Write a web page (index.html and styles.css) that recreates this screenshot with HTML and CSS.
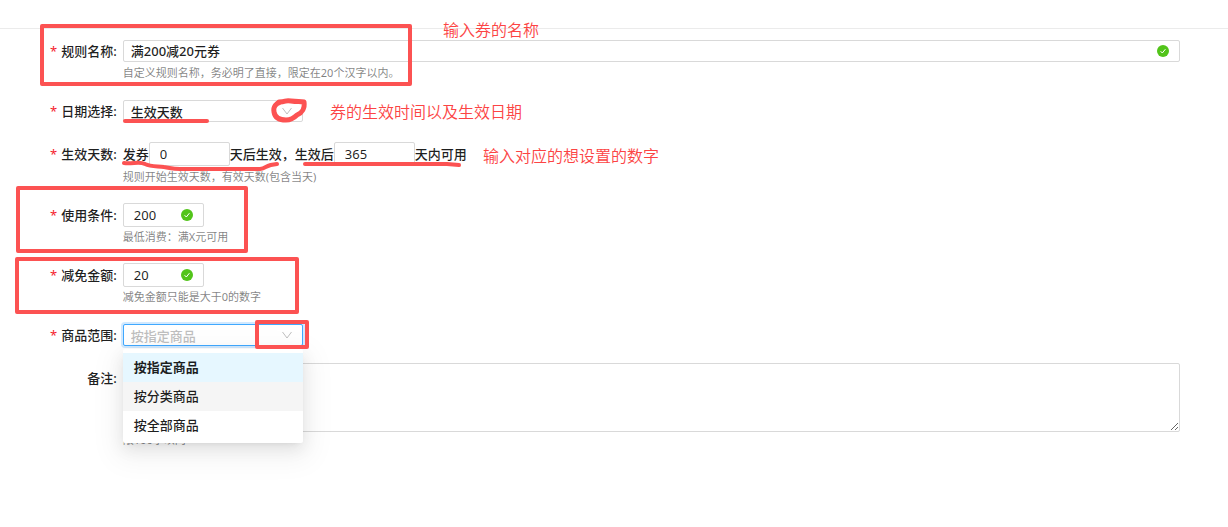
FILE: index.html
```html
<!DOCTYPE html>
<html lang="zh-CN">
<head>
    <meta charset="UTF-8">
    <meta name="viewport" content="width=device-width, initial-scale=1.0">
    <title>优惠券规则</title>
    <link rel="stylesheet" href="styles.css">
</head>
<body>

<div class="top-bar"></div>

<form class="rule-form" action="#" method="post">
    <div class="form-item">
        <label class="form-label required" for="rule-name">规则名称:</label>
        <div class="form-content">
            <div class="control">
                <div class="input-wrap wide">
                    <input type="text" id="rule-name" name="rule_name" class="input" value="满200减20元券">
                    <svg class="ok-icon" viewBox="0 0 12 12"><circle cx="6" cy="6" r="6"/><path d="M3.6 6.2l1.7 1.8 3.1-3.8"/></svg>
                </div>
            </div>
            <div class="help">自定义规则名称，务必明了直接，限定在20个汉字以内。</div>
        </div>
    </div>

    <div class="form-item">
        <label class="form-label required" for="date-type">日期选择:</label>
        <div class="form-content">
            <div class="control">
                <div class="select-wrap">
                    <select id="date-type" name="date_type" class="select">
                        <option>生效天数</option>
                    </select>
                    <svg class="arrow" viewBox="0 0 10 8"><path d="M.5 1L5 7l4.500-6"/></svg>
                </div>
            </div>
        </div>
    </div>

    <div class="form-item">
        <label class="form-label required tall" for="start-days">生效天数:</label>
        <div class="form-content">
            <div class="control tall">
                <span>发券</span>
                <input type="text" id="start-days" name="start_days" class="input number" value="0">
                <label for="valid-days">天后生效，生效后</label>
                <input type="text" id="valid-days" name="valid_days" class="input number" value="365">
                <span>天内可用</span>
            </div>
            <div class="help">规则开始生效天数，有效天数(包含当天)</div>
        </div>
    </div>

    <div class="form-item">
        <label class="form-label required" for="min-amount">使用条件:</label>
        <div class="form-content">
            <div class="control">
                <div class="input-wrap">
                    <input type="text" id="min-amount" name="min_amount" class="input number" value="200">
                    <svg class="ok-icon" viewBox="0 0 12 12"><circle cx="6" cy="6" r="6"/><path d="M3.6 6.2l1.7 1.8 3.1-3.8"/></svg>
                </div>
            </div>
            <div class="help">最低消费：满X元可用</div>
        </div>
    </div>

    <div class="form-item">
        <label class="form-label required" for="discount">减免金额:</label>
        <div class="form-content">
            <div class="control">
                <div class="input-wrap">
                    <input type="text" id="discount" name="discount" class="input number" value="20">
                    <svg class="ok-icon" viewBox="0 0 12 12"><circle cx="6" cy="6" r="6"/><path d="M3.6 6.2l1.7 1.8 3.1-3.8"/></svg>
                </div>
            </div>
            <div class="help">减免金额只能是大于0的数字</div>
        </div>
    </div>

    <div class="form-item compact">
        <label class="form-label required" for="goods-range">商品范围:</label>
        <div class="form-content">
            <div class="control">
                <div class="select-wrap">
                    <select id="goods-range" name="goods_range" class="select open">
                        <option>按指定商品</option>
                        <option>按分类商品</option>
                        <option>按全部商品</option>
                    </select>
                    <svg class="arrow" viewBox="0 0 10 8"><path d="M.5 1L5 7l4.500-6"/></svg>
                    <ul class="dropdown" role="listbox" aria-label="商品范围">
                        <li class="selected" role="option" aria-selected="true">按指定商品</li>
                        <li class="active" role="option">按分类商品</li>
                        <li role="option">按全部商品</li>
                    </ul>
                </div>
            </div>
        </div>
    </div>

    <div class="form-item">
        <label class="form-label remark-label" for="remark">备注:</label>
        <div class="form-content">
            <textarea id="remark" name="remark" class="textarea"></textarea>
            <div class="help remark-help">限100字以内</div>
        </div>
    </div>
</form>

<!-- Guide marks drawn over the form -->
<svg class="marks" width="1228" height="527" aria-hidden="true">
    <rect x="42" y="26" width="368" height="58"/>
    <path d="M125 121H207"/>
    <path class="scribble" d="M279 102C287 102 284 100 291 101C298 102 300 101 304 102C305 108 302 113 297 115C294 118 291 120 286 120C280 120 275 118 274 112C273 107 276 103 281 102"/>
    <path d="M124 163C133 164 140 161 145 164C151 167 158 166 164 167C171 168 172 169 180 169H260C267 168 265 165 277 164"/>
    <path d="M305 164H447L459 165"/>
    <rect x="18" y="188" width="228" height="63"/>
    <rect x="17" y="259" width="280" height="53"/>
    <rect x="257" y="322" width="50" height="25"/>
</svg>
<span class="note note-name">输入券的名称</span>
<span class="note note-date">券的生效时间以及生效日期</span>
<span class="note note-days">输入对应的想设置的数字</span>

</body>
</html>
```

FILE: styles.css
```css
* {
    box-sizing: border-box;
}

body {
    position: relative;
    margin: 0;
    background-color: #ffffff;
    color: rgba(0, 0, 0, 0.88);
    font-family: "Noto Sans", "Noto Sans CJK SC", sans-serif;
    font-size: 13px;
    font-weight: 500;
    line-height: 22px;
}

input,
select,
textarea {
    font: inherit;
    color: inherit;
}

.top-bar {
    height: 29px;
    border-bottom: 1px solid #ebebeb;
}

.rule-form {
    padding: 10px 48px 60px 0;
}

/* Form rows */
.form-item {
    display: flex;
    margin-bottom: 18px;
}

.form-item.compact {
    margin-bottom: 16px;
}

.form-label {
    flex: none;
    width: 10vw;
    padding-right: 6px;
    line-height: 24px;
    text-align: right;
    white-space: nowrap;
}

.form-label.tall {
    line-height: 26px;
}

.form-label.remark-label {
    line-height: 30px;
}

.required::before {
    content: "*";
    margin-right: 4px;
    color: #f5222d;
    font-weight: 400;
}

.form-content {
    flex: 1;
    min-width: 0;
}

.control {
    display: flex;
    align-items: center;
    height: 24px;
    white-space: nowrap;
}

.control.tall {
    height: 26px;
}

.help {
    height: 20px;
    margin-bottom: -2px;
    color: rgba(0, 0, 0, 0.5);
    font-size: 11px;
    font-weight: 400;
    line-height: 20px;
}

.help.remark-help {
    line-height: 16px;
}

/* Inputs */
.input-wrap,
.select-wrap {
    position: relative;
}

.input-wrap.wide {
    flex: 1;
}

.input,
.select,
.textarea {
    display: block;
    width: 100%;
    height: 22px;
    padding: 0 7px;
    border: 1px solid #d9d9d9;
    border-radius: 2px;
    background-color: #ffffff;
    outline: none;
}

.input.number {
    width: 81px;
    height: 24px;
    padding: 0 10px;
    font-weight: 400;
}

.select-wrap {
    width: 180px;
}

.select {
    padding-bottom: 2px;
    appearance: none;
}

.select.open {
    border-color: #40a9ff;
    box-shadow: 0 0 0 2px rgba(24, 144, 255, 0.2);
    color: #bfbfbf;
}

.textarea {
    height: 69px;
    resize: vertical;
}

.ok-icon {
    position: absolute;
    top: 50%;
    right: 11px;
    width: 12px;
    height: 12px;
    margin-top: -6px;
    fill: #52c41a;
}

.ok-icon path {
    fill: none;
    stroke: #ffffff;
}

.arrow {
    position: absolute;
    top: 7px;
    right: 11px;
    width: 10px;
    height: 8px;
    fill: none;
    stroke: #bfbfbf;
    pointer-events: none;
}

/* Dropdown list */
.dropdown {
    position: absolute;
    top: 100%;
    left: 0;
    z-index: 10;
    width: 100%;
    margin: 3px 0 0;
    padding: 4px 0 3px;
    border-radius: 2px;
    background-color: #ffffff;
    box-shadow: 0 3px 6px -4px rgba(0, 0, 0, 0.12), 0 6px 16px rgba(0, 0, 0, 0.08), 0 9px 28px 8px rgba(0, 0, 0, 0.05);
    list-style: none;
}

.dropdown li {
    padding: 0 11px;
    line-height: 29px;
}

.dropdown .selected {
    background-color: #e6f7ff;
    font-weight: 700;
}

.dropdown .active {
    background-color: #f5f5f5;
}

/* Guide marks */
.marks {
    position: absolute;
    top: 0;
    left: 0;
    z-index: 20;
    fill: none;
    stroke: #fc5252;
    stroke-width: 4;
    stroke-linecap: round;
    stroke-linejoin: round;
    pointer-events: none;
}

.marks .scribble {
    stroke-width: 5;
}

.note {
    position: absolute;
    z-index: 20;
    color: #fc4444;
    font-size: 16px;
    font-weight: 350;
    line-height: 24px;
    white-space: nowrap;
}

.note-name {
    top: 18px;
    left: 443px;
}

.note-date {
    top: 100px;
    left: 330px;
}

.note-days {
    top: 144px;
    left: 483px;
}
```
